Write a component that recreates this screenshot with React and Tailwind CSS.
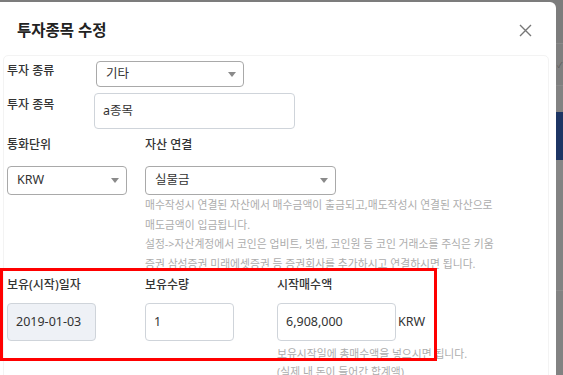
import React from 'react';

const font = { fontFamily: "'Noto Sans', 'Noto Sans CJK KR', sans-serif" };

function Caret() {
    return (
        <svg width="8" height="5" viewBox="0 0 8 5" className="shrink-0">
            <polygon points="0,0 8,0 4,5" fill="#8a8a8a" />
        </svg>
    );
}

function Select({ value, className }) {
    return (
        <div className={`flex items-center justify-between border border-[#a9a9a9] rounded-[4px] bg-white pl-[9px] pr-[7px] text-[12.5px] text-[#333] ${className}`}>
            <span>{value}</span>
            <Caret />
        </div>
    );
}

function Input({ value, className }) {
    return (
        <div className={`flex items-center border border-[#cfd4da] rounded-[4px] pl-[8px] text-[12.5px] text-[#333] ${className}`}>
            {value}
        </div>
    );
}

export default function App() {
    return (
        <div className="relative flex w-[563px] h-[375px] overflow-hidden bg-[#7c7c7c]" style={font}>
            {/* Modal */}
            <div className="mt-[2px] w-[556px] shrink-0 bg-white rounded-tr-[6px]">
                {/* Header */}
                <div className="flex items-center justify-between h-[53px] pl-[17px] pr-[24px] pt-[4px]">
                    <h2 className="text-[15.5px] font-bold text-[#222]">투자종목 수정</h2>
                    <svg width="13" height="13" viewBox="0 0 13 13">
                        <path d="M1 1L12 12M12 1L1 12" stroke="#777" strokeWidth="1.4" />
                    </svg>
                </div>

                {/* Body card */}
                <div className="ml-[3px] mr-[7px] h-[330px] border border-[#f3f3f3] rounded-[5px] pl-[3px] pt-[5px] text-[12px] text-[#333]">
                    <div className="flex items-start">
                        <div className="w-[89px] pt-[1px] font-medium">투자 종류</div>
                        <Select value="기타" className="w-[148px] h-[26px]" />
                    </div>
                    <div className="flex items-start mt-[6px]">
                        <div className="w-[87px] pt-[3px] font-medium">투자 종목</div>
                        <Input value="a종목" className="w-[201px] h-[36px] pl-[6px]" />
                    </div>

                    <div className="flex mt-[7px]">
                        <div className="w-[138px] font-medium leading-[18px]">통화단위</div>
                        <div className="font-medium leading-[18px]">자산 연결</div>
                    </div>
                    <div className="flex mt-[12px]">
                        <div className="w-[138px]">
                            <Select value="KRW" className="w-[120px] h-[29px]" />
                        </div>
                        <div>
                            <Select value="실물금" className="w-[191px] h-[29px]" />
                            <div className="text-[10.8px] leading-[19.5px] text-[#adadad] whitespace-nowrap">
                                <div>매수작성시 연결된 자산에서 매수금액이 출금되고,매도작성시 연결된 자산으로</div>
                                <div>매도금액이 입금됩니다.</div>
                                <div>설정-&gt;자산계정에서 코인은 업비트, 빗썸, 코인원 등 코인 거래소를 주식은 키움</div>
                                <div>증권 삼성증권 미래에셋증권 등 증권회사를 추가하시고 연결하시면 됩니다.</div>
                            </div>
                        </div>
                    </div>

                    <div className="grid grid-cols-[138px_132px_1fr] mt-[3px]">
                        <div className="font-medium leading-[18px]">보유(시작)일자</div>
                        <div className="font-medium leading-[18px]">보유수량</div>
                        <div className="font-medium leading-[18px]">시작매수액</div>

                        <Input value="2019-01-03" className="mt-[9px] w-[89px] h-[38px] bg-[#eef1f6]" />
                        <Input value="1" className="mt-[9px] w-[89px] h-[38px]" />
                        <div className="mt-[9px] flex items-center gap-[2px]">
                            <Input value="6,908,000" className="w-[119px] h-[38px]" />
                            <span className="text-[12.5px]">KRW</span>
                        </div>

                        <div className="col-start-3 mt-[4px] text-[10.8px] leading-[18px] text-[#adadad] whitespace-nowrap">
                            <div>보유시작일에 총매수액을 넣으시면 됩니다.</div>
                            <div>(실제 내 돈이 들어간 합계액)</div>
                        </div>
                    </div>
                </div>
            </div>

            {/* Dimmed page behind the modal */}
            <div className="flex-1 flex flex-col">
                <div className="h-[43px]" />
                <div className="h-[42px] border-t border-[#8a8a8a] bg-[#7f7f7f] flex items-center pl-[1px] text-[8px] text-[#5a5a5a]">✓</div>
                <div className="h-[27px] border-t border-[#8a8a8a] bg-[#828282]" />
                <div className="h-[48px] bg-[#1d3564]" />
                <div className="h-[20px] bg-[#868686]" />
                <div className="h-[110px] bg-[#828282]" />
                <div className="flex-1 border-t border-[#8c8c8c] bg-[#828282]" />
            </div>

            {/* Red highlight annotation */}
            <div className="absolute left-0 top-[268px] w-[437px] h-[93px] border-[3px] border-[#ff0000] pointer-events-none" />
        </div>
    );
}
